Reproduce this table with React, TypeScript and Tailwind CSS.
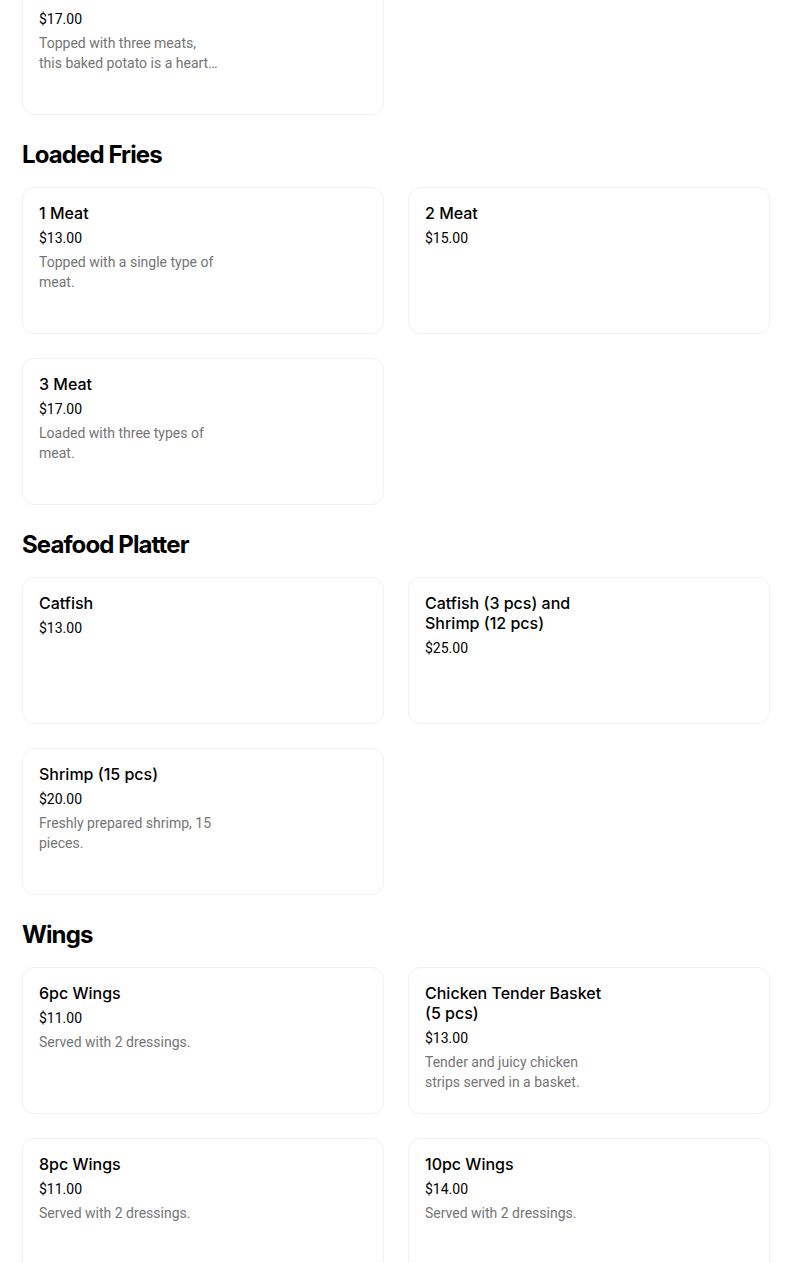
import React from "react";

type Item = { title: string; price: string; desc?: string };
type Section = { heading?: string; items: Item[] };

const sections: Section[] = [
  {
    items: [
      {
        title: "3 Meat Baked Potato",
        price: "$17.00",
        desc: "Topped with three meats, this baked potato is a hearty meal for any appetite.",
      },
    ],
  },
  {
    heading: "Loaded Fries",
    items: [
      { title: "1 Meat", price: "$13.00", desc: "Topped with a single type of meat." },
      { title: "2 Meat", price: "$15.00" },
      { title: "3 Meat", price: "$17.00", desc: "Loaded with three types of meat." },
    ],
  },
  {
    heading: "Seafood Platter",
    items: [
      { title: "Catfish", price: "$13.00" },
      { title: "Catfish (3 pcs) and Shrimp (12 pcs)", price: "$25.00" },
      { title: "Shrimp (15 pcs)", price: "$20.00", desc: "Freshly prepared shrimp, 15 pieces." },
    ],
  },
  {
    heading: "Wings",
    items: [
      { title: "6pc Wings", price: "$11.00", desc: "Served with 2 dressings." },
      {
        title: "Chicken Tender Basket (5 pcs)",
        price: "$13.00",
        desc: "Tender and juicy chicken strips served in a basket.",
      },
      { title: "8pc Wings", price: "$11.00", desc: "Served with 2 dressings." },
      { title: "10pc Wings", price: "$14.00", desc: "Served with 2 dressings." },
    ],
  },
];

function Card({ item }: { item: Item }) {
  return (
    <div className="h-[147px] rounded-xl border border-[#f1f1f1] bg-white px-4 pt-[15px]">
      <div className="w-[180px]">
        <div className="text-[16px] leading-5 font-medium text-black">{item.title}</div>
        <div className="mt-[5px] font-['Roboto',sans-serif] text-[14px] leading-5 text-black">
          {item.price}
        </div>
        {item.desc && (
          <div className="mt-[4px] line-clamp-2 font-['Roboto',sans-serif] text-[14px] leading-5 text-[#757575]">
            {item.desc}
          </div>
        )}
      </div>
    </div>
  );
}

export default function App() {
  return (
    <div
      className="min-h-screen bg-white"
      style={{ fontFamily: "Inter, 'Noto Sans', sans-serif" }}
    >
      <div className="ml-[22px] -mt-[32px] w-[748px]">
        {sections.map((s, i) => (
          <div key={i}>
            {s.heading && (
              <h2 className="pt-[24px] pb-[16px] text-[24px] leading-8 font-bold tracking-[-0.9px] text-black">
                {s.heading}
              </h2>
            )}
            <div className="grid grid-cols-2 gap-x-6 gap-y-6">
              {s.items.map((it, j) => (
                <Card key={j} item={it} />
              ))}
            </div>
          </div>
        ))}
      </div>
    </div>
  );
}
